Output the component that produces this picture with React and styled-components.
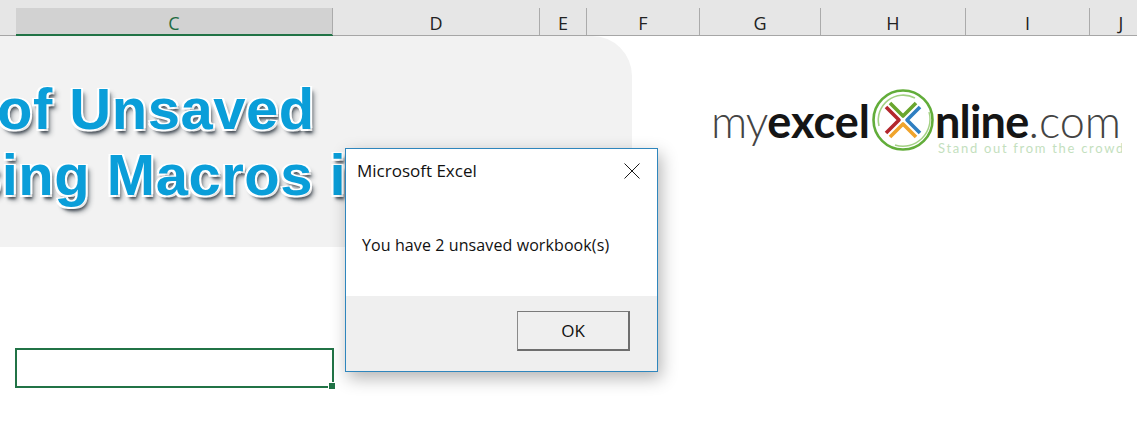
import styled, { createGlobalStyle } from 'styled-components';

const columns = [
  { name: '', width: 16 },
  { name: 'C', width: 317, active: true },
  { name: 'D', width: 207 },
  { name: 'E', width: 47 },
  { name: 'F', width: 113 },
  { name: 'G', width: 121 },
  { name: 'H', width: 145 },
  { name: 'I', width: 124 },
  { name: 'J', width: 62 },
];

const App = () => {
  return (
    <Sheet>
      <GlobalStyle />
      <ColumnHeader>
        {columns.map((col) => (
          <ColumnCell key={col.width} $width={col.width} $active={col.active}>
            {col.name}
          </ColumnCell>
        ))}
      </ColumnHeader>
      <TopRow>
        <Banner>
          <BannerLine>of Unsaved</BannerLine>
          <BannerLine $second>sing Macros i</BannerLine>
        </Banner>
        <Logo>
          <LogoRow>
            <LogoThin $spacing="-1px">my</LogoThin>
            <LogoBold>excel</LogoBold>
            <LogoMark viewBox="0 0 64 64">
              <circle cx="32" cy="32" r="29.5" fill="none" stroke="#62ad3a" strokeWidth="2.6" />
              <path d="M8 38 A25 25 0 0 1 44 10" fill="none" stroke="#a3d184" strokeWidth="1.6" />
              <path d="M58 24 A27 27 0 0 1 24 57" fill="none" stroke="#a3d184" strokeWidth="1.4" />
              <g fill="none" strokeWidth="3.6" strokeLinejoin="round">
                <path d="M19 15 L32 28 L45 15" stroke="#6aa62e" />
                <path d="M15 19 L28 32 L15 45" stroke="#b3272d" />
                <path d="M49 19 L36 32 L49 45" stroke="#2f7fc1" />
                <path d="M19 49 L32 36 L45 49" stroke="#f0a42c" />
              </g>
            </LogoMark>
            <LogoBold $spacing="-0.8px">nline</LogoBold>
            <LogoThin>.com</LogoThin>
          </LogoRow>
          <Tagline>Stand out from the crowd</Tagline>
        </Logo>
      </TopRow>
      <SelectedCell>
        <FillHandle />
      </SelectedCell>
      <Dialog>
        <DialogTitleBar>
          <DialogTitle>Microsoft Excel</DialogTitle>
          <CloseIcon viewBox="0 0 16 16">
            <path d="M0.5 0.5 L15.5 15.5 M15.5 0.5 L0.5 15.5" stroke="#1a1a1a" strokeWidth="1" fill="none" />
          </CloseIcon>
        </DialogTitleBar>
        <DialogBody>You have 2 unsaved workbook(s)</DialogBody>
        <DialogFooter>
          <OkButton>OK</OkButton>
        </DialogFooter>
      </Dialog>
    </Sheet>
  );
};

const GlobalStyle = createGlobalStyle`
  html, body {
    margin: 0;
    background: #fff;
    overflow: hidden;
  }
`;

const Sheet = styled.div`
  position: relative;
  width: 1137px;
  height: 439px;
  overflow: hidden;
  background: #fff;
  font-family: "Open Sans", "Noto Sans", sans-serif;
`;

const ColumnHeader = styled.div`
  display: flex;
  height: 36px;
  padding-top: 8px;
  box-sizing: border-box;
  background: #e6e6e6;
  border-bottom: 1px solid #a6a6a6;
`;

const ColumnCell = styled.div`
  flex: none;
  width: ${(p) => p.$width}px;
  box-sizing: border-box;
  display: flex;
  align-items: center;
  justify-content: center;
  padding-top: 3px;
  font-size: 18px;
  color: ${(p) => (p.$active ? '#1f6b41' : '#222')};
  background: ${(p) => (p.$active ? '#d2d2d2' : 'transparent')};
  border-right: 1px solid #ababab;
  box-shadow: ${(p) => (p.$active ? '0 1px 0 #217346, inset 0 -1px 0 #217346' : 'none')};
  &:first-child,
  &:last-child {
    border-right: none;
  }
`;

const TopRow = styled.div`
  display: flex;
  height: 211px;
`;

const Banner = styled.div`
  flex: none;
  width: 632px;
  height: 211px;
  overflow: hidden;
  box-sizing: border-box;
  padding-top: 40px;
  background: #f2f2f2;
  border-top-right-radius: 40px;
  font-family: "Liberation Sans", Arial, sans-serif;
  font-weight: 700;
`;

const BannerLine = styled.div`
  font-size: 58px;
  line-height: 66px;
  white-space: nowrap;
  letter-spacing: 0.5px;
  margin-left: ${(p) => (p.$second ? '-31px' : '-3px')};
  color: #0a9ed9;
  text-shadow: -2px -1px 0 #fff, 2px -1px 0 #fff, -2px 2px 0 #fff, 2px 2px 0 #e8e8e8,
    2px 4px 3px rgba(40, 50, 60, 0.75), 4px 5px 5px rgba(40, 50, 60, 0.45);
`;

const Logo = styled.div`
  flex: none;
  width: 411px;
  margin: 52px 0 0 79px;
  overflow: hidden;
`;

const LogoRow = styled.div`
  display: flex;
  align-items: center;
  height: 64px;
  font-family: Lato, "Open Sans", sans-serif;
  font-size: 45px;
  color: #1a1a1a;
`;

const LogoThin = styled.span`
  font-weight: 300;
  color: #444;
  padding-top: 2px;
  letter-spacing: ${(p) => p.$spacing || '0'};
`;

const LogoBold = styled.span`
  font-weight: 700;
  color: #151515;
  padding-top: 2px;
  letter-spacing: ${(p) => p.$spacing || '0'};
`;

const LogoMark = styled.svg`
  flex: none;
  width: 64px;
  height: 64px;
  margin-left: 1px;
`;

const Tagline = styled.div`
  margin: -11px 0 0 227px;
  font-family: Lato, sans-serif;
  font-size: 13px;
  letter-spacing: 1.7px;
  line-height: 14px;
  white-space: nowrap;
  color: #c4dfbe;
`;

const SelectedCell = styled.div`
  position: relative;
  width: 319px;
  height: 40px;
  box-sizing: border-box;
  margin: 101px 0 0 15px;
  border: 2px solid #217346;
`;

const FillHandle = styled.span`
  position: absolute;
  right: -3px;
  bottom: -3px;
  width: 6px;
  height: 6px;
  background: #217346;
  border: 1px solid #fff;
  border-width: 1px 0 0 1px;
`;

const Dialog = styled.div`
  position: absolute;
  left: 345px;
  top: 148px;
  width: 313px;
  height: 224px;
  box-sizing: border-box;
  display: flex;
  flex-direction: column;
  background: #fff;
  border: 1px solid #2f86bd;
  box-shadow: 3px 6px 16px rgba(0, 0, 0, 0.3);
`;

const DialogTitleBar = styled.div`
  display: flex;
  align-items: center;
  justify-content: space-between;
  height: 43px;
  padding: 0 17px 0 11px;
`;

const DialogTitle = styled.div`
  font-size: 17px;
  color: #111;
`;

const CloseIcon = styled.svg`
  width: 16px;
  height: 16px;
`;

const DialogBody = styled.div`
  flex: 1;
  padding: 42px 0 0 16px;
  font-size: 16px;
  letter-spacing: 0.1px;
  color: #111;
`;

const DialogFooter = styled.div`
  display: flex;
  justify-content: flex-end;
  height: 75px;
  box-sizing: border-box;
  padding: 15px 27px 0 0;
  background: #efefef;
`;

const OkButton = styled.button`
  width: 113px;
  height: 40px;
  box-sizing: border-box;
  padding: 0;
  font-family: inherit;
  font-size: 17px;
  color: #111;
  background: #efefef;
  border: 2px solid;
  border-color: #7a7a7a #6e6e6e #6e6e6e #8a8a8a;
  border-top-width: 1px;
  border-left-width: 1px;
`;

export default App;
